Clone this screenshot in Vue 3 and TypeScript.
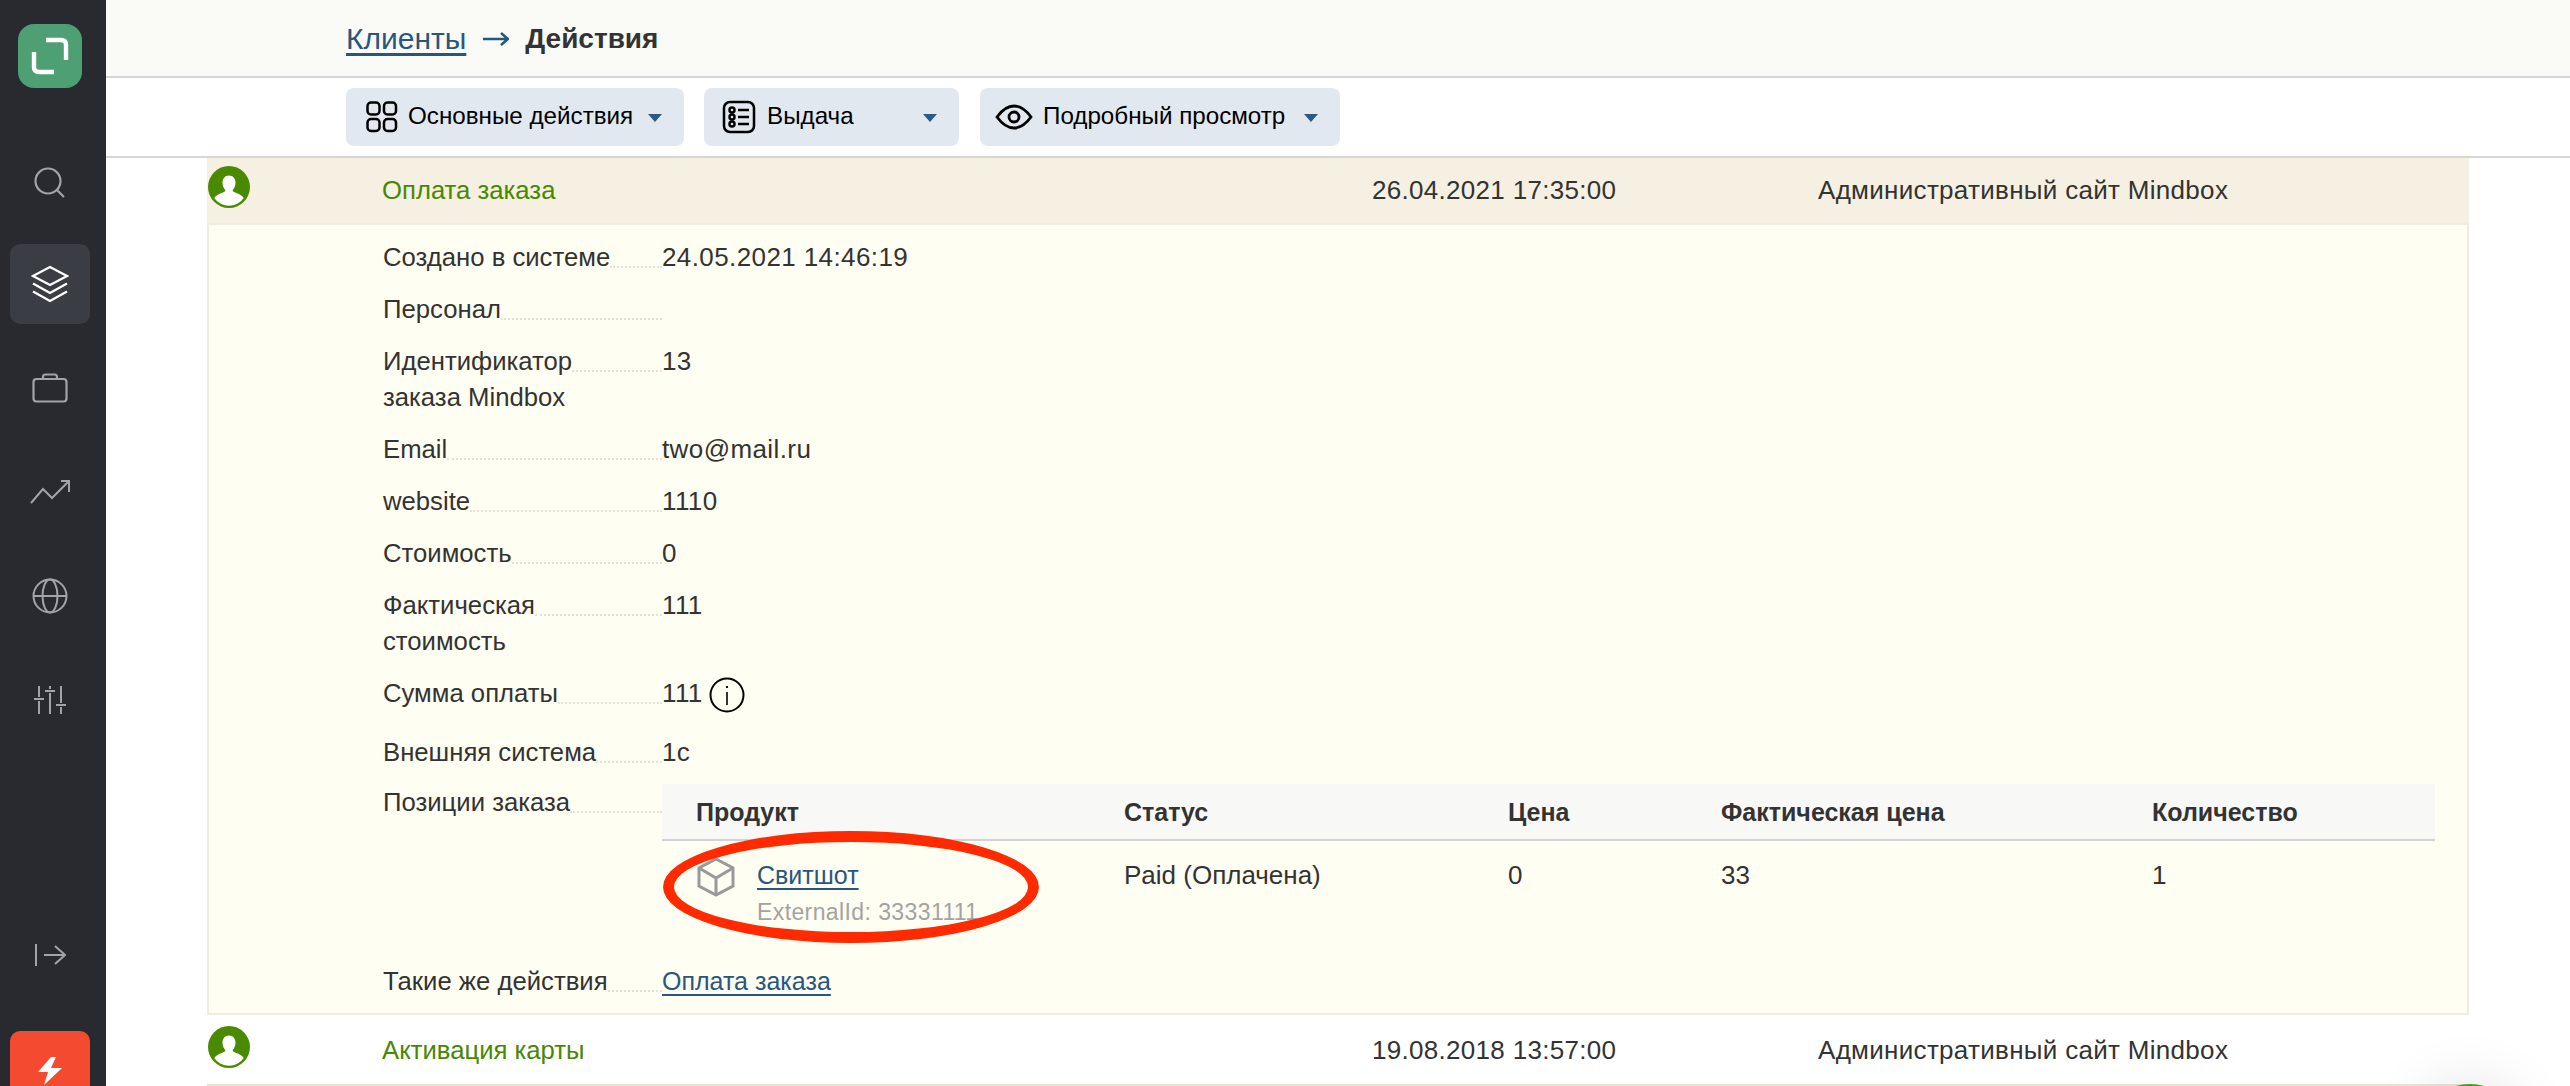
<script setup lang="ts">
interface Detail { label: string[]; value: string; info?: boolean }
const details: Detail[] = [
  { label: ['Создано в системе'], value: '24.05.2021 14:46:19' },
  { label: ['Персонал'], value: '' },
  { label: ['Идентификатор', 'заказа Mindbox'], value: '13' },
  { label: ['Email'], value: 'two@mail.ru' },
  { label: ['website'], value: '1110' },
  { label: ['Стоимость'], value: '0' },
  { label: ['Фактическая', 'стоимость'], value: '111' },
  { label: ['Сумма оплаты'], value: '111', info: true },
  { label: ['Внешняя система'], value: '1c' },
]
</script>

<template>
  <div class="app">
    <aside class="sidebar">
      <div class="logo">
        <svg width="64" height="64" viewBox="0 0 64 64" fill="none" stroke="#fff" stroke-width="4.400">
          <path d="M28 16H43Q48 16 48 21V36" />
          <path d="M16 28V43Q16 48 21 48H36" />
        </svg>
      </div>
      <div class="nav nav-search">
        <svg width="34" height="34" viewBox="0 0 34 34" fill="none" stroke="#a3a4a7" stroke-width="2.200">
          <circle cx="15" cy="15" r="12.500" />
          <path d="M24 24l7 7" />
        </svg>
      </div>
      <div class="nav nav-active">
        <svg width="38" height="38" viewBox="0 0 38 38" fill="none" stroke="#fff" stroke-width="2.200">
          <path d="M19 2L36 11 19 20 2 11Z" />
          <path d="M2 18.500l17 9.500 17-9.500" />
          <path d="M2 26.500l17 9.500 17-9.500" />
        </svg>
      </div>
      <div class="nav">
        <svg width="36" height="30" viewBox="0 0 36 30" fill="none" stroke="#a3a4a7" stroke-width="2.200">
          <rect x="1.500" y="6" width="33" height="22.500" rx="3" />
          <path d="M11 6V4Q11 1.500 13.500 1.500H22.500Q25 1.500 25 4V6" />
        </svg>
      </div>
      <div class="nav">
        <svg width="40" height="26" viewBox="0 0 40 26" fill="none" stroke="#a3a4a7" stroke-width="2">
          <path d="M1 24L13 10l9 9L39 2" />
          <path d="M31 2h8v11" />
        </svg>
      </div>
      <div class="nav">
        <svg width="36" height="36" viewBox="0 0 36 36" fill="none" stroke="#a3a4a7" stroke-width="2">
          <circle cx="18" cy="18" r="16.500" />
          <ellipse cx="18" cy="18" rx="7.500" ry="16.500" />
          <path d="M1.500 18h33" />
        </svg>
      </div>
      <div class="nav">
        <svg width="34" height="28" viewBox="0 0 34 28" fill="none" stroke="#a3a4a7" stroke-width="2">
          <path d="M6 0v11M6 15v13M1 13h10M17 0v3M17 7v21M12 5h10M28 0v17M28 21v7M23 19h10" />
        </svg>
      </div>
      <div class="nav nav-collapse">
        <svg width="32" height="24" viewBox="0 0 32 24" fill="none" stroke="#a3a4a7" stroke-width="2">
          <path d="M2 1v22M10 12h21M21 3l10 9-10 9" />
        </svg>
      </div>
      <div class="nav nav-bolt">
        <svg width="26" height="28" viewBox="0 0 26 28" fill="#fff">
          <path d="M14 0L1 15h10L7 28 25 11H14L19 0Z" />
        </svg>
      </div>
    </aside>

    <main class="main">
      <header class="header">
        <a class="crumb">Клиенты</a>
        <svg class="crumb-arrow" width="26" height="14" viewBox="0 0 26 14" fill="none" stroke="#28567f" stroke-width="2.600">
          <path d="M0 7h24M18 1l7 6-7 6" />
        </svg>
        <span class="crumb-current">Действия</span>
      </header>

      <div class="toolbar">
        <button class="tbtn tbtn-main">
          <svg width="32" height="32" viewBox="0 0 32 32" fill="none" stroke="#000" stroke-width="2.500">
            <rect x="1.500" y="1.500" width="12" height="12" rx="3.500" />
            <rect x="18" y="1.500" width="12" height="12" rx="3.500" />
            <rect x="1.500" y="18" width="12" height="12" rx="3.500" />
            <rect x="18" y="18" width="12" height="12" rx="3.500" />
          </svg>
          <span class="tbtn-text">Основные действия</span>
          <i class="caret"></i>
        </button>
        <button class="tbtn tbtn-out">
          <svg width="34" height="34" viewBox="0 0 34 34" fill="none" stroke="#000" stroke-width="2.500">
            <rect x="2" y="2" width="30" height="30" rx="6" />
            <circle cx="10" cy="10" r="2.500" />
            <circle cx="10" cy="17" r="2.500" />
            <circle cx="10" cy="24" r="2.500" />
            <path d="M16 10h11M16 17h11M16 24h11" />
          </svg>
          <span class="tbtn-text">Выдача</span>
          <i class="caret"></i>
        </button>
        <button class="tbtn tbtn-view">
          <svg width="38" height="26" viewBox="0 0 38 26" fill="none" stroke="#000" stroke-width="2.800">
            <path d="M2 13Q10 2 19 2T36 13Q28 24 19 24T2 13Z" />
            <circle cx="19" cy="13" r="5" />
          </svg>
          <span class="tbtn-text">Подробный просмотр</span>
          <i class="caret"></i>
        </button>
      </div>

      <section class="list">
        <div class="row row-open">
          <svg class="avatar" width="42" height="42" viewBox="0 0 42 42">
            <circle cx="21" cy="21" r="21" fill="#4a8a00" />
            <path d="M21 9.500c3.800 0 6.500 2.800 6.500 7 0 3-1 5.800-2.800 7.500-.2 1.500.8 2 3.500 3 3 1 5.800 2.500 7.600 5A18 18 0 0 1 6.200 32c1.800-2.500 4.600-4 7.600-5 2.700-1 3.700-1.500 3.500-3-1.800-1.700-2.800-4.500-2.800-7.500 0-4.200 2.700-7 6.500-7Z" fill="#fff" />
          </svg>
          <span class="row-name">Оплата заказа</span>
          <span class="row-text">26.04.2021 17:35:00</span>
          <span class="row-text">Административный сайт Mindbox</span>
        </div>

        <div class="body">
          <div v-for="d in details" :key="d.label[0]" class="detail" :class="{ 'detail-info': d.info }">
            <div class="label">
              <span class="label-text"><span v-for="l in d.label" :key="l" class="label-line">{{ l }}</span></span>
              <i class="leader"></i>
            </div>
            <div class="value">
              {{ d.value }}
              <svg v-if="d.info" class="info" width="36" height="36" viewBox="0 0 36 36" fill="none" stroke="#000">
                <circle cx="18" cy="18" r="16.500" stroke-width="2" />
                <path d="M18 15v13" stroke-width="1.600" />
                <path d="M18 9v2" stroke-width="2" />
              </svg>
            </div>
          </div>

          <div class="detail detail-table">
            <div class="label">
              <span class="label-text"><span class="label-line">Позиции заказа</span></span>
              <i class="leader"></i>
            </div>
            <div class="table">
              <div class="tr th">
                <span>Продукт</span><span>Статус</span><span>Цена</span><span>Фактическая цена</span><span>Количество</span>
              </div>
              <div class="tr td">
                <span class="product">
                  <svg class="box" width="38" height="40" viewBox="0 0 38 40" fill="none" stroke="#999" stroke-width="3">
                    <path d="M19 2L36 11V29L19 38 2 29V11Z" />
                    <path d="M2 11l17 10 17-10M19 21v17" />
                  </svg>
                  <span class="product-text">
                    <a class="link">Свитшот</a>
                    <span class="ext">ExternalId: 33331111</span>
                  </span>
                </span>
                <span>Paid (Оплачена)</span><span>0</span><span>33</span><span>1</span>
              </div>
              <div class="ring"></div>
            </div>
          </div>

          <div class="detail detail-last">
            <div class="label">
              <span class="label-text"><span class="label-line">Такие же действия</span></span>
              <i class="leader"></i>
            </div>
            <div class="value value-link"><a class="link">Оплата заказа</a></div>
          </div>
        </div>

        <div class="row row-next">
          <svg class="avatar" width="42" height="42" viewBox="0 0 42 42">
            <circle cx="21" cy="21" r="21" fill="#4a8a00" />
            <path d="M21 9.500c3.800 0 6.500 2.800 6.500 7 0 3-1 5.800-2.800 7.500-.2 1.500.8 2 3.500 3 3 1 5.800 2.500 7.600 5A18 18 0 0 1 6.200 32c1.800-2.500 4.600-4 7.600-5 2.700-1 3.700-1.500 3.500-3-1.800-1.700-2.800-4.500-2.800-7.500 0-4.200 2.700-7 6.500-7Z" fill="#fff" />
          </svg>
          <span class="row-name">Активация карты</span>
          <span class="row-text">19.08.2018 13:57:00</span>
          <span class="row-text">Административный сайт Mindbox</span>
        </div>
        <div class="row-tail"></div>
      </section>
    </main>

    <div class="chat"></div>
  </div>
</template>

<style>
html, body { margin: 0; background: #fff; overflow: hidden; }
</style>

<style scoped>
.app {
  position: relative;
  display: flex;
  width: 2570px;
  height: 1086px;
  overflow: hidden;
  font-family: "Liberation Sans", sans-serif;
  font-size: 26px;
  line-height: 36px;
  color: #333;
}
.sidebar {
  flex: 0 0 106px;
  box-sizing: border-box;
  padding-right: 6px;
  display: flex;
  flex-direction: column;
  align-items: center;
  background: #282a30;
  overflow: hidden;
}
.logo {
  flex: none;
  width: 64px;
  height: 64px;
  margin-top: 24px;
  border-radius: 16px;
  background: #4f9f74;
}
.logo svg, .nav svg { display: block; }
.nav {
  flex: none;
  width: 80px;
  height: 80px;
  margin-top: 24px;
  border-radius: 10px;
  display: flex;
  align-items: center;
  justify-content: center;
}
.nav-search { margin-top: 55px; }
.nav-active { margin-top: 21px; background: #3a3d43; }
.nav-collapse { margin-top: 175px; }
.nav-bolt { margin-top: 36px; background: #f44b30; }
.main { flex: 1; min-width: 0; display: flex; flex-direction: column; }
.header {
  flex: none;
  height: 74px;
  padding: 2px 0 0 240px;
  border-bottom: 2px solid #d6d6d6;
  background: #fafbf6;
  display: flex;
  align-items: center;
  font-size: 30px;
}
.crumb { color: #28567f; text-decoration: underline; text-underline-offset: 4px; }
.crumb-arrow { margin: 0 16px 0 17px; }
.crumb-current { font-weight: 700; font-size: 28px; color: #333; }
.toolbar {
  flex: none;
  height: 68px;
  padding: 10px 0 0 240px;
  border-bottom: 2px solid #d6d6d6;
  display: flex;
  gap: 20px;
}
.tbtn {
  position: relative;
  height: 58px;
  padding: 0;
  border: 0;
  border-radius: 8px;
  background: #e2e8ef;
  display: flex;
  align-items: center;
  font: inherit;
  font-size: 24.200px;
  color: #000;
  text-align: left;
}
.tbtn svg { flex: none; display: block; }
.tbtn-text { white-space: nowrap; margin-bottom: 3px; }
.tbtn-main { width: 338px; padding-left: 20px; }
.tbtn-main .tbtn-text { margin-left: 10px; }
.tbtn-out { width: 255px; padding-left: 18px; }
.tbtn-out .tbtn-text { margin-left: 11px; }
.tbtn-view { width: 360px; padding-left: 15px; margin-left: 1px; }
.tbtn-view .tbtn-text { margin-left: 10px; }
.caret {
  position: absolute;
  right: 22px;
  top: 26px;
  width: 0;
  height: 0;
  border-left: 7px solid transparent;
  border-right: 7px solid transparent;
  border-top: 8px solid #2b5a84;
}
.list { padding: 0 101px; }
.row {
  display: grid;
  grid-template-columns: 175px 990px 446px 1fr;
  align-items: center;
  height: 63px;
  padding-bottom: 2px;
  border-bottom: 2px solid #efece0;
}
.row-open { background: #f5f0e1; }
.row-next { height: 69px; padding-bottom: 0; border-bottom-color: #e8e5d5; }
.row-tail { height: 4px; background: #faf8ee; }
.avatar { display: block; margin: 0 0 5px 1px; }
.row-name { color: #478800; font-size: 25.700px; }
.row-text { letter-spacing: 0.3px; }
.body {
  background: #fffef2;
  border: solid #efece0;
  border-width: 0 2px 2px;
  padding: 14px 32px 14px 174px;
}
.detail { display: grid; grid-template-columns: 279px 1fr; margin-bottom: 16px; }
.detail-info { min-height: 43px; }
.detail-table { margin-top: -2px; }
.detail-last { margin-bottom: 0; }
.label { display: flex; align-items: flex-start; font-size: 25.700px; }
.label-text { flex: none; }
.label-line { display: block; }
.leader { flex: 1; margin-top: 27px; border-bottom: 2px dotted #e2e2da; }
.value { display: flex; align-items: flex-start; letter-spacing: 0.4px; }
.value-link { font-size: 25px; letter-spacing: 0; }
.info { flex: none; margin: 2px 0 0 6px; }
.table { position: relative; }
.tr {
  display: grid;
  grid-template-columns: 428px 384px 213px 431px 1fr;
  padding-left: 34px;
}
.th {
  height: 55px;
  align-items: center;
  background: #f8f8f7;
  border-bottom: 2px solid #d2d2d2;
  font-size: 25px;
  font-weight: 700;
}
.td { height: 106px; padding-top: 16px; box-sizing: border-box; }
.product { display: flex; align-items: flex-start; }
.box { flex: none; margin: 0 22px 0 1px; }
.product-text { display: flex; flex-direction: column; font-size: 25px; }
.link { color: #28567f; text-decoration: underline; text-underline-offset: 4px; }
.ext { margin-top: 1px; color: #a3a3a3; font-size: 23px; letter-spacing: 0.4px; }
.ring {
  position: absolute;
  left: 1px;
  top: 47px;
  width: 376px;
  height: 112px;
  box-sizing: border-box;
  border: 11px solid #ff2a00;
  border-radius: 50%;
}
.chat {
  position: absolute;
  left: 2420px;
  top: 1084px;
  width: 100px;
  height: 100px;
  border-radius: 50%;
  background: #3aa31a;
  box-shadow: 0 0 60px rgba(0, 0, 0, 0.12);
}
</style>
